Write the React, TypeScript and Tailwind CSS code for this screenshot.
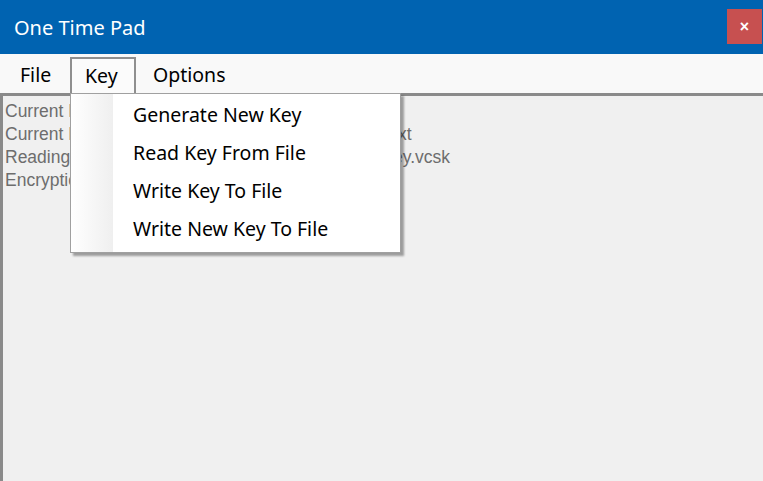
import React from "react";

const ui = { fontFamily: '"Noto Sans", "Open Sans", sans-serif' };
const sans = { fontFamily: '"Liberation Sans", Arial, sans-serif' };

export default function App() {
  const lines = [
    "Current Key: Loaded",
    "Current File: C:\\Users\\Owen\\Documents\\plaintext.txt",
    "Reading Key: C:\\Users\\Owen\\Documents\\mypadkey.vcsk",
    "Encryption Complete",
  ];
  const items = ["Generate New Key", "Read Key From File", "Write Key To File", "Write New Key To File"];
  return (
    <div className="relative w-[763px] h-[481px] overflow-hidden flex flex-col bg-[#f0f0f0]" style={ui}>
      <div className="h-[54px] shrink-0 bg-[#0063b1] flex items-center justify-between pl-[14px] pr-px">
        <span className="text-white text-[20px] leading-none mt-[1px]">One Time Pad</span>
        <div className="w-[35px] h-[35px] bg-[#c75050] flex items-center justify-center -mt-px">
          <span className="text-white text-[16px] font-bold leading-none" style={sans}>×</span>
        </div>
      </div>
      <div className="h-[39px] shrink-0 bg-[#f9f9f9] flex items-end text-[19.5px] text-black">
        <div className="w-[70px] pl-[20px] h-[36px] flex items-center">File</div>
        <div className="w-[66px] h-[36px] border-l-2 border-t-2 border-r-2 border-[#8f8f8f] bg-[#fbfbfb] flex items-center pl-[13px]">Key</div>
        <div className="ml-[17px] h-[36px] flex items-center">Options</div>
      </div>
      <div className="flex-1 border-t-[3px] border-l-[3px] border-[#8a8a8a] bg-[#f0f0f0] pl-[2px] pt-[4px] text-[17.5px] leading-[23px] text-[#6d6d6d] whitespace-nowrap" style={sans}>
        {lines.map((l) => (
          <div key={l}>{l}</div>
        ))}
      </div>
      <div className="absolute left-[70px] top-[93px] w-[331px] h-[160px] bg-white border border-[#a0a0a0] shadow-[3px_3px_2px_rgba(0,0,0,0.35)] flex">
        <div className="w-[42px] bg-gradient-to-r from-white to-[#efefef]" />
        <div className="flex-1 pt-[2px]">
          {items.map((it) => (
            <div key={it} className="h-[38px] flex items-center pl-[20px] text-[19.5px] text-black">
              {it}
            </div>
          ))}
        </div>
      </div>
    </div>
  );
}
